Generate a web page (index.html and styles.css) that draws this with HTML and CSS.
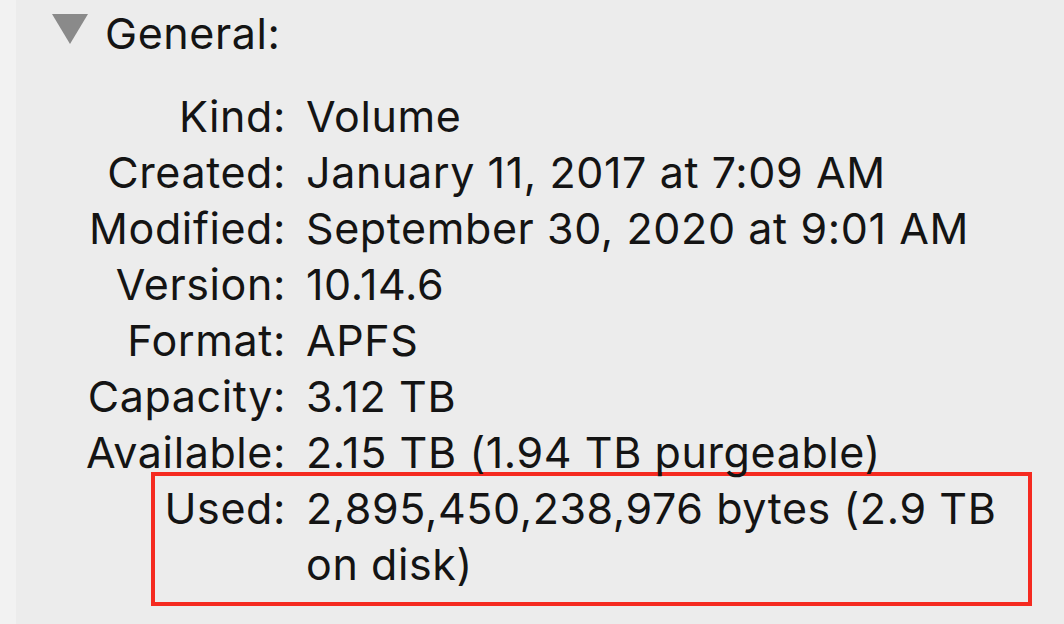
FILE: index.html
```html
<!DOCTYPE html>
<html lang="en">
<head>
<meta charset="utf-8">
<title>General Info</title>
<link rel="stylesheet" href="styles.css">
</head>
<body>
<div class="window">
  <div class="sidebar"></div>
  <div class="content">
    <div class="header">
      <svg class="disclosure" width="36" height="30" viewBox="0 0 36 30"><polygon points="0,0 36,0 18,30" /></svg>
      <span class="title">General:</span>
    </div>
    <div class="rows">
      <div class="row"><span class="label">Kind:</span><span class="value">Volume</span></div>
      <div class="row"><span class="label">Created:</span><span class="value">January 11, 2017 at 7:09 AM</span></div>
      <div class="row"><span class="label">Modified:</span><span class="value">September 30, 2020 at 9:01 AM</span></div>
      <div class="row"><span class="label">Version:</span><span class="value">10.14.6</span></div>
      <div class="row"><span class="label">Format:</span><span class="value">APFS</span></div>
      <div class="row"><span class="label">Capacity:</span><span class="value">3.12 TB</span></div>
      <div class="row"><span class="label">Available:</span><span class="value">2.15 TB (1.94 TB purgeable)</span></div>
      <div class="highlight">
        <div class="row"><span class="label">Used:</span><span class="value">2,895,450,238,976 bytes (2.9 TB on disk)</span></div>
      </div>
    </div>
  </div>
</div>
</body>
</html>
```
FILE: styles.css
```css
html, body {
  margin: 0;
  padding: 0;
  background: #ececec;
}
body {
  font-family: "Inter", "Liberation Sans", Arial, sans-serif;
  font-size: 43px;
  letter-spacing: 0.6px;
  line-height: 56px;
  color: #141414;
}
.window {
  display: flex;
  width: 1064px;
  height: 624px;
  overflow: hidden;
}
.sidebar {
  width: 16px;
  flex: none;
  background: #f2f2f2;
}
.content {
  flex: 1;
  padding-top: 5px;
}
.header {
  display: flex;
  align-items: center;
  height: 56px;
  margin-bottom: 27px;
}
.disclosure {
  margin-left: 36px;
  margin-right: 17px;
  margin-top: -8px;
  fill: #8a8a8a;
}
.row {
  display: flex;
}
.label {
  flex: none;
  width: 270px;
  text-align: right;
}
.value {
  padding-left: 20px;
}
.highlight {
  margin-left: 135px;
  width: 881px;
  box-sizing: border-box;
  margin-top: -8px;
  border: 4px solid #f52a20;
  padding: 4px 24px 10px 0;
}
.highlight .label {
  width: 131px;
}
```
